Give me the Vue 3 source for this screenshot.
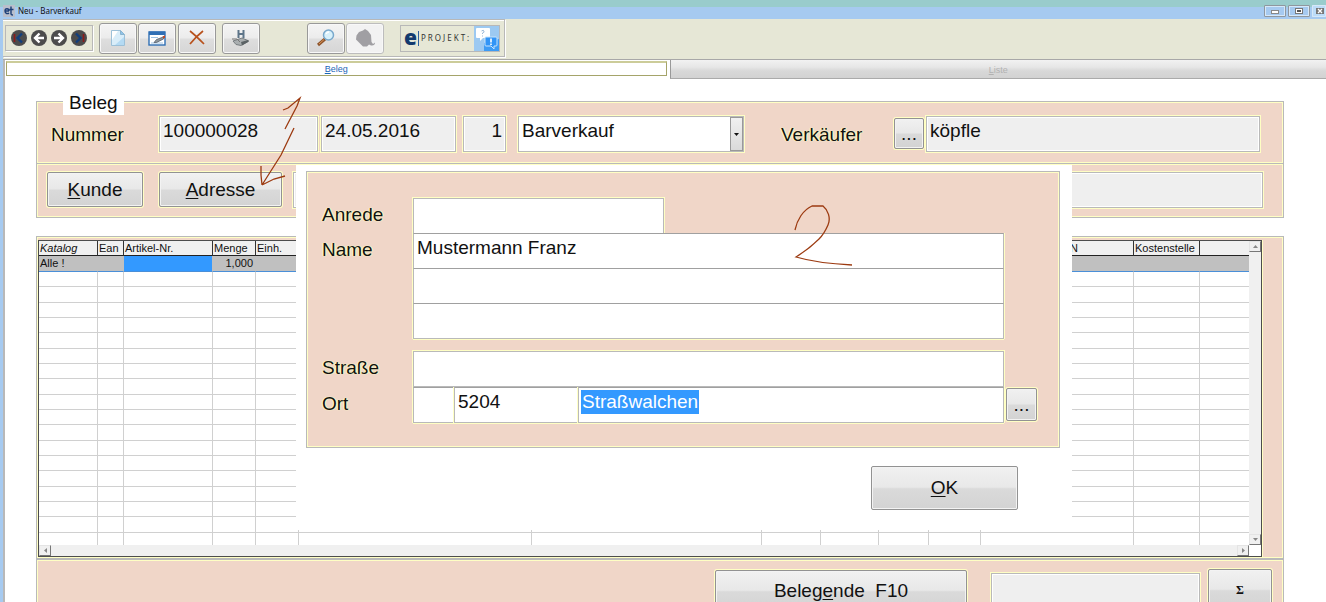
<script setup>
import { ref } from 'vue'

const columns = [
  { label: 'Katalog', cls: 'c59 italic' },
  { label: 'Ean', cls: 'c26' },
  { label: 'Artikel-Nr.', cls: 'c89' },
  { label: 'Menge', cls: 'c43' },
  { label: 'Einh.', cls: 'c43' },
  { label: '', cls: 'c233' },
  { label: '', cls: 'c230' },
  { label: '', cls: 'c59' },
  { label: '', cls: 'c58' },
  { label: '', cls: 'c50' },
  { label: '', cls: 'c52' },
  { label: 'N', cls: 'c153 tail' },
  { label: 'Kostenstelle', cls: 'c66' },
  { label: '', cls: 'rest' },
]
const firstRow = ['Alle !', '', '', '1,000', '', '', '', '', '', '', '', '', '', '']
const emptyRows = 18

const nummer = ref('100000028')
const datum = ref('24.05.2016')
const anzahl = ref('1')
const verkaeufer = ref('köpfle')
const name1 = ref('Mustermann Franz')
const plz = ref('5204')
const ort = ref('Straßwalchen')
</script>

<template>
  <div class="window">
    <header class="titlebar">
      <svg class="appicon" width="12" height="12" viewBox="0 0 12 12" aria-hidden="true">
        <rect width="12" height="12" fill="#b9bfcc" />
        <path d="M2 6h4M6 6c0-3-4-3-4 0s3 3 4 2M8 1.500v7.500q0 1 2 1M6.500 4.500h4" fill="none" stroke="#1c3f78" stroke-width="1.400" />
      </svg>
      <span class="title">Neu - Barverkauf</span>
      <div class="winbtns">
        <button class="winbtn" aria-label="Minimieren">
          <svg width="20" height="10"><rect x="6.500" y="4.500" width="7" height="3" fill="#fff" stroke="#888" /></svg>
        </button>
        <button class="winbtn" aria-label="Maximieren">
          <svg width="20" height="10"><rect x="6.500" y="2.500" width="7" height="5" fill="#fff" stroke="#777" /><path d="M8 5h4" stroke="#555" stroke-width="2" /></svg>
        </button>
        <button class="winbtn close" aria-label="Schließen">
          <svg width="14" height="10"><rect x="4" y="2" width="8" height="6" fill="#777" /><path d="M6 3l4 4M10 3l-4 4" stroke="#fff" stroke-width="1.300" /></svg>
        </button>
      </div>
    </header>

    <div class="body">
      <div class="toolstrip">
        <div class="tools">
          <div class="nav">
            <button aria-label="Erster"><svg viewBox="0 0 18 18"><circle cx="9" cy="9" r="8" fill="#4c4c4c" /><path d="M12 4.500L7.500 9l4.500 4.500" fill="none" stroke="#123f7c" stroke-width="2.400" /><path d="M4.500 5v8" stroke="#8c1a1a" stroke-width="1.600" /></svg></button>
            <button aria-label="Zurück"><svg viewBox="0 0 18 18"><circle cx="9" cy="9" r="8" fill="#4c4c4c" /><path d="M9.500 4.500L5 9l4.500 4.500M5.500 9h8.500" fill="none" stroke="#fff" stroke-width="2.400" /></svg></button>
            <button aria-label="Weiter"><svg viewBox="0 0 18 18"><circle cx="9" cy="9" r="8" fill="#4c4c4c" /><path d="M8.500 4.500L13 9l-4.500 4.500M12.500 9H4" fill="none" stroke="#fff" stroke-width="2.400" /></svg></button>
            <button aria-label="Letzter"><svg viewBox="0 0 18 18"><circle cx="9" cy="9" r="8" fill="#4c4c4c" /><path d="M6 4.500L10.500 9L6 13.500" fill="none" stroke="#123f7c" stroke-width="2.400" /><path d="M13.500 5v8" stroke="#8c1a1a" stroke-width="1.600" /></svg></button>
          </div>
          <button class="tool" aria-label="Neu">
            <svg width="18" height="18" viewBox="0 0 18 18">
              <path d="M2.500 1.500h9l4 4v11h-13z" fill="#d9edf9" stroke="#9cc0d8" />
              <path d="M3 2h6L3 11z" fill="#fff" /><path d="M15 8v8H6z" fill="#b4daf3" />
              <path d="M11.500 1.500v4h4z" fill="#8fc4ea" stroke="#8ab4d0" />
            </svg>
          </button>
          <button class="tool second" aria-label="Bearbeiten">
            <svg width="18" height="18" viewBox="0 0 18 18">
              <rect x="1" y="3" width="16" height="13" fill="#fff" stroke="#2f6fb5" stroke-width="1.400" />
              <rect x="1" y="2.500" width="16" height="3.500" fill="#2f6fb5" />
              <path d="M3 8.500h7M3 14h12" stroke="#9fc3e4" />
              <path d="M6 13.500l2.500-3 8-3-1 2.500-7 3.500z" fill="#8d969e" stroke="#4a5560" stroke-width=".7" />
              <path d="M14.500 7.500l2.500-1v2l-1.500 1z" fill="#c8451c" />
            </svg>
          </button>
          <button class="tool third" aria-label="Löschen">
            <svg width="18" height="18" viewBox="0 0 18 18"><path d="M2 2c4 3 10 9 14 13M15 2C10 6 6 10 2 15" fill="none" stroke="#b8511c" stroke-width="1.700" /></svg>
          </button>
          <button class="tool" aria-label="Speichern">
            <svg width="20" height="18" viewBox="0 0 20 18">
              <path d="M2 12l9-3 7 3-8 4.500-5-1z" fill="#a9aeb0" stroke="#666c70" stroke-width=".8" />
              <path d="M10 13l7-2v2l-6 3.500z" fill="#5b6265" />
              <path d="M7.500 1v8M12.500 1v8M7.500 5h5" stroke="#5d7488" stroke-width="2" fill="none" />
              <path d="M1 10h5l3 3" stroke="#777" fill="none" />
            </svg>
          </button>
          <button class="tool search" aria-label="Suchen">
            <svg width="20" height="20" viewBox="0 0 20 20">
              <path d="M9 11l-7 6" stroke="#8e542a" stroke-width="3" /><path d="M8 11.500l-5 4.500" stroke="#d9955a" stroke-width="1" />
              <circle cx="12.500" cy="7" r="5" fill="#d8f1fb" stroke="#79a9cc" stroke-width="1.500" />
              <path d="M10 6q1-2 3-2" stroke="#fff" stroke-width="1.300" fill="none" />
            </svg>
          </button>
          <button class="tool second disabled" aria-label="Figur" disabled>
            <svg width="20" height="20" viewBox="0 0 20 20"><path d="M4 4l4-1.500 2-1.500 3 2 3 4 .500 7 1.500 2 2-1.500q0 3.500-4 3l-2-1-2 2H8l-3-3-4-4 .500-4z" fill="#a09fa3" /></svg>
          </button>
          <a class="logo" href="#" aria-label="e-Projekt">
            <b>e</b><i></i><span>PROJEKT:</span>
            <svg width="25" height="25" viewBox="0 0 25 25" aria-hidden="true">
              <rect width="25" height="25" fill="#9cc9f1" />
              <path d="M25 13v12H10V17z" fill="#3c9bf5" />
              <path d="M3 2h12q1 0 1 1v8q0 1-1 1H9l-3 3v-3H3q-1 0-1-1V3q0-1 1-1z" fill="#fff" />
              <path d="M12 11h10q1 0 1 1v7q0 1-1 1h-2v3l-3-3h-5q-1 0-1-1v-7q0-1 1-1z" fill="#3194f6" stroke="#c8e4fb" />
              <path d="M7.500 5q2-1.500 2.500 0t-1.500 2v1M8.500 9.500v1" stroke="#9cb9d8" fill="none" />
              <path d="M17 12.500v4M17 17.500v1.500" stroke="#fff" stroke-width="1.600" />
            </svg>
          </a>
        </div>
      </div>

      <nav class="tabs">
        <a class="tab active" href="#"><u>B</u>eleg</a>
        <a class="tab idle" href="#"><u>L</u>iste</a>
      </nav>

      <main class="page">
        <section class="panel head">
          <h2 class="legend">Beleg</h2>
          <label class="lbl w108" for="nummer">Nummer</label>
          <input id="nummer" v-model="nummer" class="field gray w159" readonly />
          <input v-model="datum" class="field gray w135" aria-label="Datum" readonly />
          <input v-model="anzahl" class="field gray w43" aria-label="Anzahl" readonly />
          <div class="combo">
            <select class="field" aria-label="Belegart"><option>Barverkauf</option></select>
            <span class="drop"><svg width="5" height="3"><path d="M0 0h5L2.500 3z" fill="#111" /></svg></span>
          </div>
          <label class="lbl w113" for="verk">Verkäufer</label>
          <button class="btn dots" aria-label="Verkäufer wählen">...</button>
          <input id="verk" v-model="verkaeufer" class="field gray grow" readonly />
        </section>

        <section class="panel actions">
          <button class="btn kunde"><span><u>K</u>unde</span></button>
          <button class="btn adresse"><span><u>A</u>dresse</span></button>
          <input class="field gray grow" aria-label="Adresse" readonly />
        </section>

        <section class="panel listing">
          <div class="frame">
            <div class="upper">
              <table>
                <thead>
                  <tr><th v-for="(c, i) in columns" :key="i" :class="c.cls">{{ c.label }}</th></tr>
                </thead>
                <tbody>
                  <tr class="current"><td v-for="(v, i) in firstRow" :key="i">{{ v }}</td></tr>
                  <tr v-for="r in emptyRows" :key="r"><td v-for="(c, i) in columns" :key="i"></td></tr>
                </tbody>
              </table>
              <div class="vbar">
                <button aria-label="Nach oben"><svg width="5" height="3"><path d="M0 3h5L2.500 0z" fill="#888" /></svg></button>
                <button aria-label="Nach unten"><svg width="5" height="3"><path d="M0 0h5L2.500 3z" fill="#888" /></svg></button>
              </div>
            </div>
            <div class="hbar">
              <button aria-label="Nach links"><svg width="3" height="5"><path d="M3 0v5L0 2.500z" fill="#888" /></svg></button>
              <button class="right" aria-label="Nach rechts"><svg width="3" height="5"><path d="M0 0v5L3 2.500z" fill="#888" /></svg></button>
              <span class="corner"></span>
            </div>
          </div>
        </section>

        <section class="panel foot">
          <button class="btn ende"><span>Beleg<u>e</u>nde&nbsp; F10</span></button>
          <input class="field gray summe" aria-label="Summe" readonly />
          <button class="btn sigma">Σ</button>
        </section>
      </main>
    </div>

    <div class="dialog" role="dialog" aria-label="Adresse">
      <form class="panel form" @submit.prevent>
        <label class="lbl" for="anrede">Anrede</label>
        <input id="anrede" class="field anrede" />
        <label class="lbl r2" for="name1">Name</label>
        <input id="name1" v-model="name1" class="field joined r2" />
        <input class="field joined r3" aria-label="Name 2" />
        <input class="field joined r4" aria-label="Name 3" />
        <label class="lbl r6" for="strasse">Straße</label>
        <input id="strasse" class="field r6" />
        <label class="lbl r7" for="ort">Ort</label>
        <div class="ortrow r7">
          <input class="field joined land" aria-label="Land" />
          <input v-model="plz" class="field joined plz" aria-label="PLZ" />
          <div class="field joined ortfield"><input id="ort" v-model="ort" class="marked" /></div>
        </div>
        <button class="btn dots r7" type="button" aria-label="Ort wählen">...</button>
      </form>
      <button class="btn ok"><span><u>O</u>K</span></button>
    </div>

    <svg class="ink" aria-hidden="true">
      <path d="M283 110l5-2 12-10-3 8-12 23M294 128l-13 27-19 30M261 166v9l1 10M262 185l12-6 11-3" />
      <path d="M795 230c2-10 8-20 17-24h11c5 4 8 12 5 19s-6 11-9 14c-7 7-15 13-23 18 17 5 36 7 56 8" />
    </svg>
  </div>
</template>

<style>
html,
body {
  margin: 0;
  background: #fff;
}
</style>

<style scoped>
* {
  box-sizing: border-box;
}
.window {
  position: relative;
  display: flex;
  flex-direction: column;
  height: 100vh;
  overflow: hidden;
  font-family: "Liberation Sans", Arial, sans-serif;
  font-size: 19px;
  color: #111;
}
button {
  font: inherit;
  color: inherit;
  padding: 0;
  border: 0;
  background: none;
  display: flex;
  align-items: center;
  justify-content: center;
}
.titlebar {
  flex: none;
  height: 19px;
  display: flex;
  align-items: flex-start;
  padding: 5px 0 0 3px;
  background: linear-gradient(#99cccc 7px, #a6caf0 7px);
}
.title {
  margin-left: 3px;
  font: 8px/12px "Noto Sans", sans-serif;
  color: #111;
}
.winbtns {
  margin-left: auto;
  display: flex;
  gap: 2px;
}
.winbtn {
  width: 22px;
  height: 12px;
  border: 1px solid #8f979f;
  border-radius: 1px;
  box-shadow: inset 0 0 0 1px #d6e8f8;
}
.winbtn.close {
  width: 14px;
  border: 0;
  background: #bcdcf8;
}
.body {
  flex: 1;
  min-height: 0;
  display: flex;
  flex-direction: column;
  border-left: 3px solid #a6caf0;
  background: #fff;
}
.toolstrip {
  flex: none;
  height: 41px;
  background: #e6e7d6;
  border-bottom: 1px solid #a8a8a8;
  display: flex;
}
.tools {
  height: 38px;
  display: flex;
  align-items: center;
  padding: 0 4px 0 2px;
  border: 1px solid #b8b8b8;
  border-left: 0;
  box-shadow: inset 0 1px 0 #fff, 1px 1px 0 #fff;
}
.nav {
  display: flex;
  gap: 2px;
  height: 26px;
  align-items: center;
  padding: 0 4px;
  border: 1px solid #b8b8b8;
  box-shadow: 1px 1px 0 #fff;
}
.nav button,
.nav svg {
  width: 18px;
  height: 18px;
}
.tool {
  width: 38px;
  height: 31px;
  margin-left: 6px;
  border: 1px solid #999;
  border-radius: 3px;
  background: linear-gradient(#f4f4f4, #ececec 48%, #dedede 52%, #d6d6d6);
  box-shadow: inset 0 0 0 1px #f8f8f8;
}
.tool.second {
  margin-left: 1px;
}
.tool.third {
  margin-left: 2px;
}
.tool.search {
  margin-left: 47px;
}
.tool.disabled {
  background: #f2f2f2;
  border-color: #bdbdbd;
}
.logo {
  margin-left: 16px;
  height: 27px;
  width: 100px;
  display: flex;
  align-items: center;
  border: 1px solid #b8b8b8;
  text-decoration: none;
  color: #333;
}
.logo b {
  margin: 0 1px 2px 3px;
  font: 900 21px/22px "Open Sans", sans-serif;
  color: #123a6e;
}
.logo i {
  width: 1px;
  height: 15px;
  background: #2d5f9c;
}
.logo span {
  flex: 1;
  margin-left: 2px;
  font: 8px/12px "Noto Sans", sans-serif;
  letter-spacing: 2px;
}
.tabs {
  flex: none;
  display: flex;
  gap: 3px;
  height: 19px;
  padding-left: 1px;
  border-left: 2px solid #b8b8b8;
}
.tab {
  font-size: 9px;
  text-align: center;
  text-decoration: none;
}
.tab.active {
  flex: 660;
  height: 15px;
  line-height: 13px;
  margin: 1px 0 0;
  border: 1px solid #a5a46a;
  border-top: 2px solid #cccc99;
  color: #1a66b8;
}
.tab.idle {
  flex: 657;
  line-height: 20px;
  color: #b2b2b2;
  background: linear-gradient(#f2f2f2, #e6e6e6 40%, #d8d8d8 60%, #d2d2d2);
  border-left: 1px solid #999;
  border-bottom: 1px solid #aaa;
}
.page {
  flex: 1;
  min-height: 0;
  padding: 22px 42px 0 31px;
  border-left: 2px solid #b8b8b8;
}
.panel {
  background: #f0d6c8;
  border: 1px solid #b9b9b9;
  box-shadow: inset 0 0 0 1px #ffffc4;
}
.lbl {
  display: flex;
  align-items: center;
  text-shadow: 0 0 1px #ffffc4, 1px 0 1px #ffffc4, -1px 0 1px #ffffc4;
}
.field {
  min-width: 0;
  width: 100%;
  height: 36px;
  margin: 0;
  padding: 0 3px 6px;
  font: inherit;
  color: #111;
  background: #fff;
  border: 1px solid #b9b9b9;
  border-radius: 0;
  outline: 0;
  box-shadow: 0 0 0 1px #ffffc4;
}
.gray {
  background: #efefef;
  box-shadow: 0 0 0 1px #ffffc4, inset 0 0 0 1px #fff;
}
.btn {
  border: 1px solid #929292;
  border-radius: 2px;
  background: linear-gradient(#f1f1f1, #e8e8e8 48%, #dadada 52%, #d3d3d3);
  box-shadow: 0 0 0 1px #ffffc4, inset 0 0 0 1px #f3f3f3;
}
u {
  text-decoration-thickness: 1px;
  text-underline-offset: 2px;
}
.tab u {
  text-underline-offset: 1px;
}
.dots {
  width: 30px;
  height: 31px;
  flex: none;
}
.head {
  position: relative;
  display: flex;
  align-items: flex-start;
  height: 63px;
  padding: 14px 23px 0 14px;
}
.legend {
  position: absolute;
  left: 26px;
  top: -11px;
  margin: 0;
  padding: 0 6px;
  font-size: 19px;
  font-weight: 400;
  line-height: 24px;
  background: #fff;
}
.head .lbl {
  flex: none;
  height: 38px;
}
.w108 {
  width: 108px;
}
.w113 {
  width: 113px;
}
.head .w159 {
  flex: none;
  width: 159px;
  margin-right: 3px;
}
.head .w135 {
  flex: none;
  width: 135px;
  margin-right: 7px;
}
.head .w43 {
  flex: none;
  width: 43px;
  margin-right: 12px;
  text-align: right;
}
.combo {
  position: relative;
  flex: none;
  width: 226px;
  margin-right: 37px;
  display: flex;
}
.combo select {
  appearance: none;
  padding-bottom: 8px;
}
.drop {
  position: absolute;
  right: 1px;
  top: 1px;
  bottom: 1px;
  width: 13px;
  display: flex;
  align-items: center;
  justify-content: center;
  border: 1px solid #999;
  background: linear-gradient(#f1f1f1, #dadada);
  pointer-events: none;
}
.head .dots {
  margin: 2px 2px 0 0;
}
.grow {
  flex: 1;
}
.actions {
  display: flex;
  height: 54px;
  padding: 8px 20px 0 10px;
  border-top: 0;
}
.actions .btn {
  flex: none;
  height: 35px;
}
.kunde {
  width: 96px;
  margin-right: 16px;
}
.adresse {
  width: 123px;
  margin-right: 11px;
}
.listing {
  margin-top: 18px;
  padding: 3px 21px 1px 1px;
}
.frame {
  border: 1px solid #4c4c4c;
  background: #fff;
  box-shadow: 1px 0 0 #ffffc4;
}
.upper {
  display: flex;
  height: 304px;
  overflow: hidden;
}
table {
  flex: 1;
  width: 100%;
  min-width: 0;
  table-layout: fixed;
  border-collapse: separate;
  border-spacing: 0;
  font-size: 11px;
  line-height: 13px;
}
th,
td {
  height: 15px;
  padding: 0 1px;
  border-right: 1px solid #d0d0d0;
  border-bottom: 1px solid #d0d0d0;
  text-align: left;
  font-weight: 400;
  white-space: nowrap;
  overflow: hidden;
}
th {
  background: #f0f0f0;
  border-right-color: #333;
  border-bottom-color: #222;
}
th:last-child,
td:last-child {
  border-right: 0;
}
tr:nth-child(3n) td {
  height: 16px;
}
.current td {
  height: 16px;
  background: #c0c0c0;
  border-right-color: #c0c0c0;
  border-bottom-color: #4a8fd8;
}
.current td:nth-child(3) {
  background: #3399ff;
}
.current td:nth-child(4) {
  padding-right: 2px;
  text-align: right;
}
.italic {
  font-style: italic;
}
.c59 {
  width: 59px;
}
.c26 {
  width: 26px;
}
.c89 {
  width: 89px;
}
.c43 {
  width: 43px;
}
.c233 {
  width: 233px;
}
.c230 {
  width: 230px;
}
.c58 {
  width: 58px;
}
.c50 {
  width: 50px;
}
.c52 {
  width: 52px;
}
.c153 {
  width: 153px;
}
.c66 {
  width: 66px;
}
.tail {
  padding-left: 89px;
}
.vbar {
  flex: none;
  width: 12px;
  display: flex;
  flex-direction: column;
  justify-content: space-between;
  background: #f0f0f0;
}
.vbar button,
.hbar button {
  width: 12px;
  height: 11px;
  background: #f0f0f0;
  border: 1px solid #e4e4e4;
  border-right-color: #777;
  border-bottom-color: #777;
}
.hbar {
  display: flex;
  height: 11px;
  background: #f0f0f0;
}
.hbar .right {
  margin-left: auto;
}
.corner {
  width: 12px;
  background: #fff;
}
.foot {
  display: flex;
  justify-content: flex-end;
  align-items: flex-start;
  height: 70px;
  padding: 9px 11px 0;
}
.ende {
  width: 252px;
  height: 42px;
  margin: 1px 24px 0 0;
}
.foot .summe {
  width: 209px;
  height: 40px;
  margin: 4px 8px 0 0;
}
.sigma {
  width: 64px;
  height: 42px;
  font: bold 12px "Liberation Serif", serif;
}
.dialog {
  position: absolute;
  left: 296px;
  right: 254px;
  top: 165px;
  height: 365px;
  padding: 6px 12px 0 10px;
  background: #fff;
}
.form {
  display: grid;
  grid-template-columns: 91px 1fr 33px;
  grid-template-rows: 35px 35px 35px 37px 11px 36px 36px;
  padding: 26px 22px 24px 15px;
}
.form .lbl {
  grid-column: 1;
  padding-bottom: 2px;
}
.form .field {
  grid-column: 2;
  height: 36px;
}
.form .joined {
  border-top-color: #a0a0a0;
  box-shadow: 1px 0 0 #ffffc4, -1px 0 0 #ffffc4;
}
.form .r4,
.ortrow .joined {
  box-shadow: 1px 0 0 #ffffc4, -1px 0 0 #ffffc4, 0 1px 0 #ffffc4;
}
.form .anrede {
  width: 251px;
}
.r2 {
  grid-row: 2;
}
.r3 {
  grid-row: 3;
}
.r4 {
  grid-row: 4;
}
.r6 {
  grid-row: 6;
}
.r7 {
  grid-row: 7;
}
.ortrow {
  grid-column: 2;
  display: flex;
}
.form .land {
  flex: none;
  width: 41px;
}
.form .plz {
  flex: none;
  width: 124px;
}
.ortfield {
  flex: 1;
  display: flex;
  align-items: center;
  padding: 0 2px 6px;
}
.marked {
  field-sizing: content;
  height: 24px;
  padding: 0 1px;
  border: 0;
  font: inherit;
  color: #fff;
  background: #3399ff;
}
.form .dots {
  grid-column: 3;
  width: 31px;
  height: 33px;
  margin: 1px 0 0 2px;
}
.ok {
  width: 147px;
  height: 44px;
  margin: 18px 42px 0 auto;
  box-shadow: inset 0 0 0 1px #f3f3f3;
}
.ink {
  position: absolute;
  inset: 0;
  width: 100%;
  height: 100%;
  pointer-events: none;
}
.ink path {
  fill: none;
  stroke: #9c3a10;
  stroke-width: 1.3;
}
</style>
